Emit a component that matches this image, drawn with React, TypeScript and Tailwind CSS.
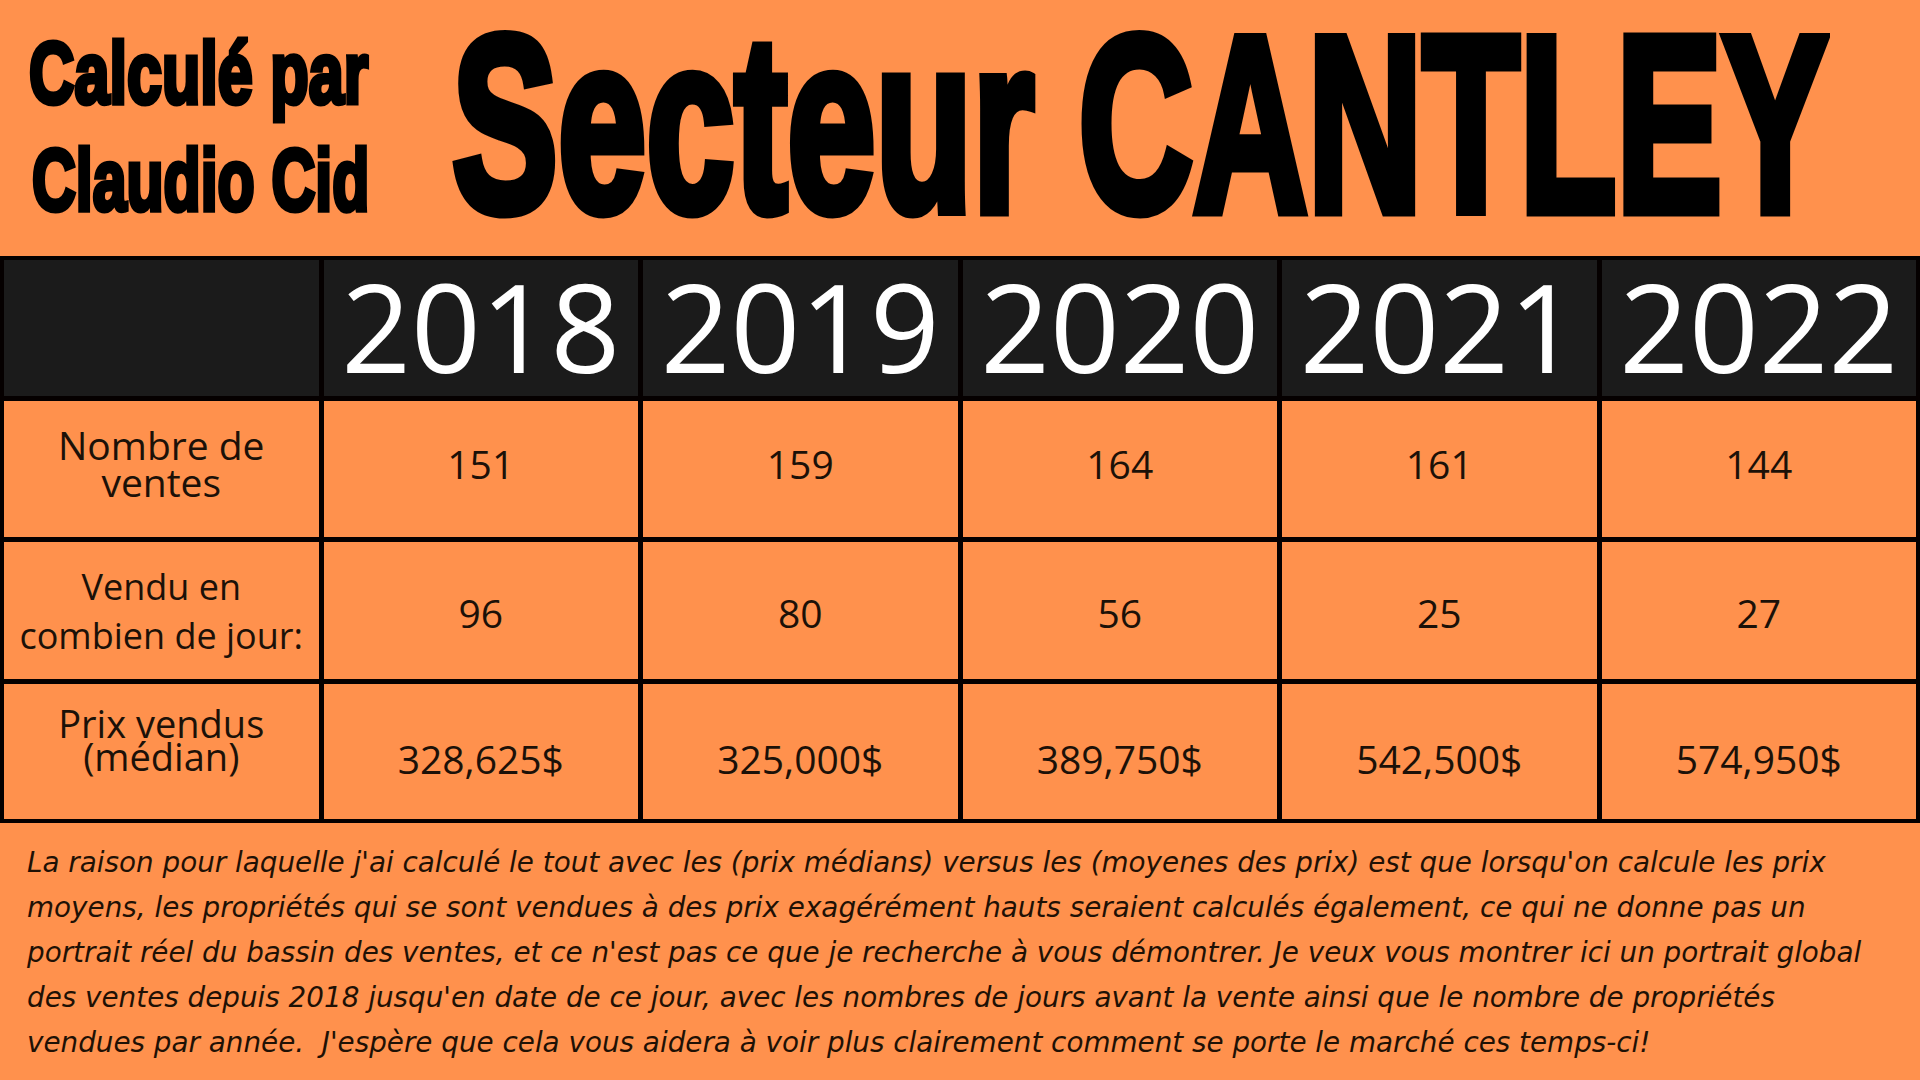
const years = ['2018', '2019', '2020', '2021', '2022']

const rows = [
    {
        label: ['Nombre de', 'ventes'],
        labelClass: 'text-[39px] leading-[37px] pb-[12px]',
        valueClass: 'pb-[12px]',
        values: ['151', '159', '164', '161', '144'],
    },
    {
        label: ['Vendu en', 'combien de jour:'],
        labelClass: 'text-[36px] leading-[49px]',
        valueClass: 'pt-[4px]',
        values: ['96', '80', '56', '25', '27'],
    },
    {
        label: ['Prix vendus', '(médian)'],
        labelClass: 'text-[38px] leading-[33px] pb-[24px]',
        valueClass: 'pt-[14px]',
        values: ['328,625$', '325,000$', '389,750$', '542,500$', '574,950$'],
    },
]

const note = [
    "La raison pour laquelle j'ai calculé le tout avec les (prix médians) versus les (moyenes des prix) est que lorsqu'on calcule les prix",
    'moyens, les propriétés qui se sont vendues à des prix exagérément hauts seraient calculés également, ce qui ne donne pas un',
    "portrait réel du bassin des ventes, et ce n'est pas ce que je recherche à vous démontrer. Je veux vous montrer ici un portrait global",
    "des ventes depuis 2018 jusqu'en date de ce jour, avec les nombres de jours avant la vente ainsi que le nombre de propriétés",
    "vendues par année.  J'espère que cela vous aidera à voir plus clairement comment se porte le marché ces temps-ci!",
]

export default function App() {
    return (
        <div className="w-[1920px] h-[1080px] overflow-hidden bg-[#ff914d] font-['Open_Sans',sans-serif] text-[#1c1108]">
            {/* Header */}
            <header className="flex h-[256px] items-start">
                <div className="w-[452px] shrink-0 pl-[29px] pt-[19px] font-['Liberation_Sans',Arial,sans-serif] font-bold text-[88px] leading-[107px] text-black [-webkit-text-stroke:5px_#000]">
                    <div className="whitespace-nowrap">
                        <span className="inline-block origin-left scale-x-[0.715]">Calculé par</span>
                    </div>
                    <div className="whitespace-nowrap pl-[3px]">
                        <span className="inline-block origin-left scale-x-[0.69]">Claudio Cid</span>
                    </div>
                </div>
                <h1 className="min-w-0 flex-1 whitespace-nowrap font-['Liberation_Sans',Arial,sans-serif] font-bold text-[250px] leading-[250px] text-black [-webkit-text-stroke:11px_#000]">
                    <span className="inline-block origin-left scale-x-[0.635]">Secteur CANTLEY</span>
                </h1>
            </header>

            {/* Table */}
            <div className="grid grid-cols-6 grid-rows-[136px_136px_137px_135px] gap-[5px] bg-[#050000] p-[4px]">
                <div className="bg-[#1b1b1b]" />
                {years.map((y) => (
                    <div key={y} className="flex items-center justify-center bg-[#1b1b1b] pb-[4px] text-[122px] leading-none text-white">
                        {y}
                    </div>
                ))}

                {rows.map((row) => (
                    <>
                        <div key={row.label[0]} className={`flex flex-col items-center justify-center bg-[#ff914d] text-center ${row.labelClass}`}>
                            <span className="whitespace-nowrap">{row.label[0]}</span>
                            <span className="whitespace-nowrap">{row.label[1]}</span>
                        </div>
                        {row.values.map((v, i) => (
                            <div key={row.label[0] + i} className={`flex items-center justify-center bg-[#ff914d] text-[39px] leading-none ${row.valueClass}`}>
                                {v}
                            </div>
                        ))}
                    </>
                ))}
            </div>

            {/* Note */}
            <div className="pl-[27px] pt-[17px] font-['DejaVu_Sans',sans-serif] text-[27.8px] leading-[45px] italic text-[#1f1105]">
                {note.map((line) => (
                    <p key={line} className="whitespace-pre">{line}</p>
                ))}
            </div>
        </div>
    )
}
